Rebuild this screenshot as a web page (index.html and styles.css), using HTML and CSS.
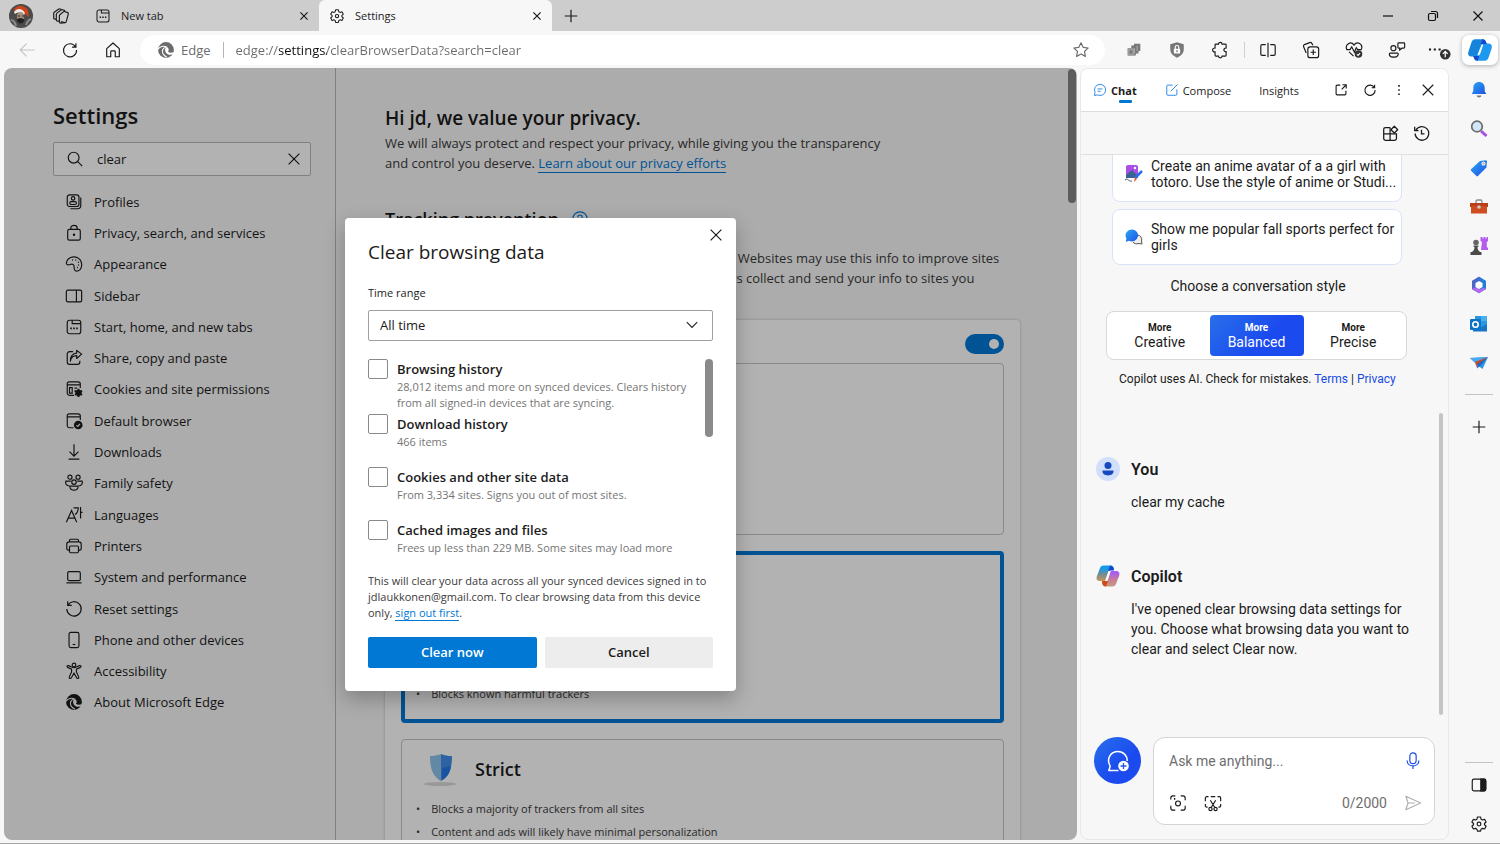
FILE: index.html
```html
<!DOCTYPE html>
<html lang="en">
<head>
  <meta charset="UTF-8" />
  <meta name="viewport" content="width=device-width, initial-scale=1.0"/>
  <title>Settings</title>
  <link rel="stylesheet" href="styles.css">
</head>
<body>
  <!-- shared icons -->
  <svg class="sprite" width="0" height="0" aria-hidden="true">
    <defs>
      <linearGradient id="blue" x1="0" y1="0" x2="1" y2="1"><stop offset="0" stop-color="#2aa8f0"/><stop offset="1" stop-color="#1f50e8"/></linearGradient>
      <linearGradient id="warmLeft" x1="0" y1="0" x2="0" y2="1"><stop offset="0.2" stop-color="#159be8"/><stop offset="0.6" stop-color="#7b8c8c"/><stop offset="1" stop-color="#c9955c"/></linearGradient>
      <linearGradient id="warmRight" x1="0" y1="0" x2="0" y2="1"><stop offset="0.1" stop-color="#a95cf0"/><stop offset="0.55" stop-color="#c67c98"/><stop offset="1" stop-color="#c99a80"/></linearGradient>
      <mask id="swirl">
        <rect width="20" height="20" fill="#fff"/>
        <path d="M1 9.500c2-3.500 6.500-4.500 9.500-2.800-4 .8-5.500 4-4 7.300 1 2 2.500 3.300 4.500 4" stroke="#000" stroke-width="1.300" fill="none"/>
        <path d="M10.200 7c2.800.3 3.600 3 2 5 1.600 1.400 4.300 1.300 6.800.2l-.6 2.300c-3.200 1.600-7 .8-8.600-1.800-1.300-2-1-4.500.4-5.700z" fill="#000"/>
      </mask>
    </defs>
    <symbol id="i-close" viewBox="0 0 20 20"><path d="M4 4l12 12M16 4L4 16"/></symbol>
    <symbol id="i-plus" viewBox="0 0 20 20"><path d="M10 3v14M3 10h14"/></symbol>
    <symbol id="i-gear" viewBox="0 0 20 20"><path d="M8.300 2.200h3.400l.6 2.400 1.500.9 2.400-.7 1.700 3-1.800 1.700v1.300l1.800 1.700-1.700 3-2.400-.7-1.500.9-.6 2.300H8.300l-.6-2.300-1.500-.9-2.400.7-1.700-3 1.800-1.700V9.500L2.100 7.800l1.700-3 2.400.7 1.500-.9z" stroke-linejoin="round"/><circle cx="10" cy="10.100" r="2.100"/></symbol>
    <symbol id="i-page" viewBox="0 0 20 20"><rect x="2.500" y="2.500" width="15" height="15" rx="2.500"/><path d="M8 2.500v3.700h9.500"/><path d="M5.800 11.500h1.800M9.100 11.500h1.800M12.400 11.500h1.800" stroke-width="1.900"/></symbol>
    <symbol id="i-edge" viewBox="0 0 20 20"><circle cx="10" cy="10" r="8.800" fill="currentColor" stroke="none" mask="url(#swirl)"/></symbol>
    <symbol id="i-refresh" viewBox="0 0 20 20"><path d="M16.200 6.500A7.300 7.300 0 1 0 17.300 10M16.600 2.500v4.300h-4.300"/></symbol>
  </svg>

  <header class="tabbar">
    <button class="profile" aria-label="Profile">
      <svg width="24" height="24" viewBox="0 0 24 24">
        <circle cx="12" cy="12" r="12" fill="#4b4b4b"/>
        <path d="M5 5c3-4 9-5 14 1l1 7-4-3C13 5 9 6 6 9z" fill="#c9441f"/>
        <path d="M5 8c3-4 8-4 11 1l-1 2c-3-3-6-3-9-1z" fill="#f0eae4"/>
        <ellipse cx="11.500" cy="12.500" rx="3.500" ry="4.500" fill="#a28e7c"/>
        <path d="M9 12h2M13 12h2M8 16c2-2 5-2 7 0-1 4-6 4-7 0z" fill="#222" stroke="#222"/>
        <path d="M2 16c3 0 4 2 5 6M22 15c-3 1-4 3-5 6" stroke="#8d8d8d" stroke-width="2" fill="none"/>
      </svg>
    </button>
    <button class="workspaces" aria-label="Workspaces">
      <svg class="icon" viewBox="0 0 20 20"><path d="M13.500 5l3.500 1c1 .3 1.400 1 1.100 2l-2.300 8.200c-.3 1-1 1.400-2 1.100l-4-1.100"/><path d="M14 4.300L9 8.300c-.6.500-.8 1-.8 1.700v6.500c0 1 .6 1.500 1.500 1.400l4.500-.5M10.500 3.100L5.800 6.500c-.7.500-1 1-1 1.700v6.200c0 .8.500 1.300 1.300 1.300h2M8 2L2.800 5.600c-.6.400-.9 1-.9 1.700v5c0 .7.500 1.200 1.200 1.200h1.600M8 2l6 1.800v1.600"/></svg>
    </button>
    <div class="tab">
      <svg class="icon" viewBox="0 0 20 20"><use href="#i-page"/></svg>
      <span>New tab</span>
      <button class="tab-close" aria-label="Close New tab"><svg class="icon" viewBox="0 0 20 20"><use href="#i-close"/></svg></button>
    </div>
    <div class="tab active">
      <svg class="icon" viewBox="0 0 20 20"><use href="#i-gear"/></svg>
      <span>Settings</span>
      <button class="tab-close" aria-label="Close Settings"><svg class="icon" viewBox="0 0 20 20"><use href="#i-close"/></svg></button>
    </div>
    <button class="new-tab" aria-label="New tab"><svg class="icon" viewBox="0 0 20 20"><use href="#i-plus"/></svg></button>
    <div class="window-buttons">
      <button aria-label="Minimize"><svg viewBox="0 0 12 12"><path d="M1 6h10"/></svg></button>
      <button aria-label="Restore"><svg viewBox="0 0 12 12"><rect x="1.500" y="3.500" width="7" height="7" rx="1.500"/><path d="M4 1.500h4.500a2 2 0 0 1 2 2V8"/></svg></button>
      <button aria-label="Close"><svg viewBox="0 0 12 12"><path d="M1.500 1.500l9 9M10.500 1.500l-9 9"/></svg></button>
    </div>
  </header>

  <div class="toolbar">
    <button class="tool disabled" aria-label="Back"><svg class="icon" viewBox="0 0 20 20"><path d="M18.500 10h-16M9.500 3l-7 7 7 7"/></svg></button>
    <button class="tool" aria-label="Refresh"><svg class="icon" viewBox="0 0 20 20"><use href="#i-refresh"/></svg></button>
    <button class="tool" aria-label="Home"><svg class="icon" viewBox="0 0 20 20"><path d="M3 8.500L10 2.200l7 6.300v9h-4.500V12a1 1 0 0 0-1-1h-3a1 1 0 0 0-1 1v5.500H3z" stroke-linejoin="round"/></svg></button>
    <div class="address">
      <svg class="icon" viewBox="0 0 20 20"><use href="#i-edge"/></svg>
      <label for="url">Edge</label>
      <input id="url" type="text" value="edge://settings/clearBrowserData?search=clear">
      <button aria-label="Add to favorites"><svg class="icon" viewBox="0 0 20 20"><path d="M10 2l2.400 5 5.500.8-4 3.800 1 5.500-4.900-2.600-4.900 2.600 1-5.500-4-3.800 5.500-.8z" stroke-linejoin="round"/></svg></button>
    </div>
    <button class="tool" aria-label="Extension"><svg class="icon" viewBox="0 0 20 20"><path d="M10 3h7v8h-2v3h-3v2H3V8h4V5h3z" fill="#777" stroke="none"/><path d="M3 8h7v8H3z" fill="#9c9c9c" stroke="none"/><path d="M10.500 8v6M13.500 5v6" stroke="#aaa"/><path d="M5 10.500h3v3.500H5z" fill="#777" stroke="none"/></svg></button>
    <button class="tool" aria-label="Ad blocker"><svg class="icon" viewBox="0 0 20 20"><path d="M10 1.500l7.500 2v6c0 4-3 7-7.500 9-4.500-2-7.500-5-7.500-9v-6z" fill="#777" stroke="none"/><rect x="6.500" y="8.500" width="7" height="5.500" rx="1" fill="#fff" stroke="none"/><path d="M8 9V7a2 2 0 0 1 4 0v2" stroke="#fff"/><path d="M10 10v2.500" stroke="#777"/></svg></button>
    <button class="tool" aria-label="Extensions"><svg class="icon" viewBox="0 0 20 20"><path d="M6 3.500h2.300a2 2 0 0 1 4 0h3.500a1 1 0 0 1 1 1v3.300c-3-.5-3.600 4.400 0 4v4a1 1 0 0 1-1 1h-3.500a2 2 0 0 1-4 0H5.500a1 1 0 0 1-1-1v-3.700c-3.600.5-3.600-4.500 0-4.300V4.500a1 1 0 0 1 1-1z"/></svg></button>
    <span class="divider"></span>
    <button class="tool" aria-label="Split screen"><svg class="icon" viewBox="0 0 20 20"><path d="M10 2v16M7.500 4H3.500a1.500 1.500 0 0 0-1.500 1.500v9A1.500 1.500 0 0 0 3.500 16h4M12.500 4h4A1.500 1.500 0 0 1 18 5.500v9a1.500 1.500 0 0 1-1.500 1.500h-4"/></svg></button>
    <button class="tool" aria-label="Collections"><svg class="icon" viewBox="0 0 20 20"><rect x="6.500" y="6.500" width="12" height="12" rx="2.500"/><path d="M12.500 9.500v6M9.500 12.500h6M4.700 13.300L1.800 6.500C1.300 5.300 1.700 4.500 2.700 4L8.500 1.800c1-.4 1.900 0 2.400.8l1.300 2.200"/></svg></button>
    <button class="tool" aria-label="Browser essentials"><svg class="icon" viewBox="0 0 20 20"><path d="M2 9.500C-.5 4 6.500-.5 10 4.500 13.500-.5 20.500 3.500 18.200 9M4.500 12l5 4.800M1.500 9.500h4l2-3 3 6 2-5 1.500 2h4.500"/><circle cx="15" cy="14.500" r="4.200" fill="#333" stroke="none"/><path d="M13.200 14.800l1.300 1.200 2.300-2.600" stroke="#fff"/></svg></button>
    <button class="tool" aria-label="Share"><svg class="icon" viewBox="0 0 20 20"><circle cx="6" cy="8" r="2.800"/><path d="M2.500 13.500h8c1.500 0 1.500 4.500-4.200 4.500S1 13.500 2.500 13.500zM12 2h5.500a1 1 0 0 1 1 1v4a1 1 0 0 1-1 1h-2l-2.500 2V8h-1a1 1 0 0 1-1-1V3a1 1 0 0 1 1-1z"/></svg></button>
    <button class="tool" aria-label="Settings and more, update available"><svg class="icon more" viewBox="0 0 24 20"><path d="M1 9.500h2.200M6 9.500h2.200M11 9.500h2.200" stroke-width="2"/><circle cx="18" cy="14.500" r="5.500" fill="#333" stroke="none"/><path d="M18 17.500v-6M15.500 14l2.500-2.500 2.500 2.500" stroke="#fff"/></svg></button>
    <button class="copilot-button" aria-label="Copilot">
      <svg width="26" height="26" viewBox="0 0 24 24"><path d="M7.500 2h7c2 0 2.500.8 3.200 3l.6 2H15l-4 11H4.500C1.500 18 .5 16 1.300 13.500l2.600-8c.7-2 1.700-3.500 3.600-3.500z" fill="#1784dc"/><path d="M16.500 22h-7c-2 0-2.500-.8-3.200-3L5.700 17H9l4-11h6.500c3 0 4 2 3.200 4.500l-2.600 8c-.7 2-1.700 3.500-3.600 3.500z" fill="#1d9af0"/><path d="M14 2c2 0 3 .8 3.700 3l.6 1.500h-5.600zM10 22c-2 0-3-.8-3.700-3l-.6-1.500h5.600z" fill="#1549cc"/><path d="M13.300 7.500c.5-1 1.700-1 1.500 0l-2.600 8c-.6 1.500-2.800 2-2.300.5z" fill="#fff"/></svg>
    </button>
  </div>

  <div class="workspace">
    <main class="page">
      <aside class="settings-nav">
        <h1>Settings</h1>
        <div class="search">
          <svg class="icon" viewBox="0 0 20 20"><circle cx="8.500" cy="8.500" r="6"/><path d="M13 13l5 5"/></svg>
          <input type="text" value="clear" aria-label="Search settings">
          <button aria-label="Clear search"><svg class="icon" viewBox="0 0 20 20"><use href="#i-close"/></svg></button>
        </div>
        <nav>
          <a href="#"><svg class="icon" viewBox="0 0 20 20"><rect x="2.500" y="2" width="13" height="13" rx="2.500"/><path d="M17.500 5v9a3.500 3.500 0 0 1-3.500 3.500H6"/><circle cx="9" cy="6" r="1.900"/><rect x="5.300" y="9.500" width="7.400" height="3.300" rx="1.600"/></svg>Profiles</a>
          <a href="#"><svg class="icon" viewBox="0 0 20 20"><rect x="3" y="6" width="14" height="12" rx="1.800"/><path d="M6.500 6V4.500c0-4 7-4 7 0V6"/><circle cx="10" cy="12" r=".7" fill="currentColor"/></svg>Privacy, search, and services</a>
          <a href="#"><svg class="icon" viewBox="0 0 20 20"><path d="M1.500 9C2.500 3 9 .5 14 3c4 2 5.500 7 4 11-1 3.500-5 5-7 3-2-2 .5-5-2-6.500C7 9.500 5.500 11 4 11c-1.700 0-2.700-.8-2.500-2z"/><path d="M8 5.500h1M11.500 5.500h1M14.300 8h1M14.700 11.200h1M13.200 14h1" stroke-width="1.700"/></svg>Appearance</a>
          <a href="#"><svg class="icon" viewBox="0 0 20 20"><rect x="1.500" y="3.500" width="17" height="13" rx="1.500"/><path d="M12.700 3.500v13"/></svg>Sidebar</a>
          <a href="#"><svg class="icon" viewBox="0 0 20 20"><use href="#i-page"/></svg>Start, home, and new tabs</a>
          <a href="#"><svg class="icon" viewBox="0 0 20 20"><path d="M9 3H5a2.500 2.500 0 0 0-2.500 2.500v9A2.500 2.500 0 0 0 5 17h9a2.500 2.500 0 0 0 2.500-2.500V13"/><path d="M6 13c.5-4 3-6.200 7-6.200V10l5.500-4.800L13 1v3C8.500 4.300 6 8 6 13z" stroke-linejoin="round" transform="translate(0 .5)"/></svg>Share, copy and paste</a>
          <a href="#"><svg class="icon" viewBox="0 0 20 20"><path d="M10 17H5a2.500 2.500 0 0 1-2.500-2.500v-10A2.500 2.500 0 0 1 5 2h9.500A2.500 2.500 0 0 1 17 4.500V9M2.500 5.500H17M5 8.500h3v6H5zM10.500 9h3M10.500 12h1"/><path d="M15 9.800v9M11.100 12l7.800 4.600M18.900 12l-7.800 4.600" stroke-width="2.200"/><circle cx="15" cy="14.300" r="2.300" stroke-width="2.400"/></svg>Cookies and site permissions</a>
          <a href="#"><svg class="icon" viewBox="0 0 20 20"><path d="M9.500 17.500H5A2.500 2.500 0 0 1 2.500 15V4.500A2.500 2.500 0 0 1 5 2h9.500A2.500 2.500 0 0 1 17 4.500V9M2.500 5.500H17"/><circle cx="14.700" cy="14.500" r="4.800" fill="currentColor" stroke="none"/><path d="M12.700 14.800l1.400 1.300 2.600-2.800" stroke="#f7f7f7"/></svg>Default browser</a>
          <a href="#"><svg class="icon" viewBox="0 0 20 20"><path d="M10 1.500v13M5 9.500l5 5 5-5M4 18h12"/></svg>Downloads</a>
          <a href="#"><svg class="icon" viewBox="0 0 20 20"><circle cx="5.500" cy="3.500" r="2.300"/><circle cx="14.500" cy="3.500" r="2.300"/><circle cx="10" cy="9" r="2.500"/><path d="M6.500 8H1c-1 3 1.200 5.500 3.800 5M13.500 8H19c1 3-1.200 5.500-3.800 5M5.500 13.500h9c.7 6-9.700 6-9 0z"/></svg>Family safety</a>
          <a href="#"><svg class="icon" viewBox="0 0 20 20"><path d="M1.500 18L7.300 5l5.700 13M3.500 13.500h7.600M9.500 2h5.200c0 3.500-1 6-3.700 7.500M17.300 1v13M17.300 7h2.200"/></svg>Languages</a>
          <a href="#"><svg class="icon" viewBox="0 0 20 20"><path d="M5 14.500H3.500A1.500 1.500 0 0 1 2 13V8c0-1.500 1-2.500 2.500-2.500h11C17 5.500 18 6.500 18 8v5a1.500 1.500 0 0 1-1.500 1.500H15M5 5.500V3.800C5 3 5.500 2.500 6.300 2.500h7.400c.8 0 1.300.5 1.300 1.300v1.700"/><rect x="5" y="10" width="10" height="7.500" rx="1.300"/></svg>Printers</a>
          <a href="#"><svg class="icon" viewBox="0 0 20 20"><rect x="3" y="4" width="14" height="10" rx="1.500"/><path d="M1.500 16.500h17"/></svg>System and performance</a>
          <a href="#"><svg class="icon" viewBox="0 0 20 20"><path d="M3 6a8 8 0 1 1-1 4M3 1.500V6h4.500"/></svg>Reset settings</a>
          <a href="#"><svg class="icon" viewBox="0 0 20 20"><rect x="4.500" y="1.500" width="11" height="17" rx="2"/><path d="M8.500 15h3"/></svg>Phone and other devices</a>
          <a href="#"><svg class="icon" viewBox="0 0 20 20"><circle cx="10" cy="3.300" r="2"/><path d="M7.500 5.500L4 4c-1.800-.6-2.300 1.300-1 2l4.300 2v3l-2.500 5.500c-.6 1.700 1.500 2.500 2.300 1L10 12.500l2.900 5c.8 1.500 2.900.7 2.300-1L12.700 11V8L17 6c1.300-.7.800-2.600-1-2l-3.500 1.500a5 5 0 0 1-5 0z"/></svg>Accessibility</a>
          <a href="#"><svg class="icon" viewBox="0 0 20 20"><use href="#i-edge"/></svg>About Microsoft Edge</a>
        </nav>
      </aside>

      <section class="settings-content">
        <h2 class="hero">Hi jd, we value your privacy.</h2>
        <p>We will always protect and respect your privacy, while giving you the transparency<br>and control you deserve. <a href="#">Learn about our privacy efforts</a></p>
        <h2 class="section-title">Tracking prevention <svg class="icon" viewBox="0 0 20 20"><circle cx="10" cy="10" r="8"/><path d="M7.500 8c0-3.300 5-3.200 5-.2 0 1.700-2.500 2-2.500 4M10 13.500v1.300"/></svg></h2>
        <p>Websites use trackers to collect info about your browsing. Websites may use this info to improve sites<br>and show you content like personalized ads. Some trackers collect and send your info to sites you</p>
        <div class="card">
          <div class="card-head">
            <input class="toggle" type="checkbox" aria-label="Tracking prevention" checked>
          </div>
          <div class="level"></div>
          <div class="level selected">
            <ul>
              <li>Blocks known harmful trackers</li>
            </ul>
          </div>
          <div class="level">
            <h3><svg width="36" height="36" viewBox="0 0 36 36"><ellipse cx="18" cy="33" rx="16" ry="2" fill="#dcdcdc"/><path d="M8 5c4 0 7-.6 11-2v27C12 26 8 20 8 5z" fill="#8fc3ec"/><path d="M19 3c4 1.400 7 2 11 2 0 15-4 21-11 25z" fill="#3f8fe6"/><path d="M20 17l9-2c-1 7-4 11.500-9 14z" fill="#2677e8"/></svg>Strict</h3>
            <ul>
              <li>Blocks a majority of trackers from all sites</li>
              <li>Content and ads will likely have minimal personalization</li>
            </ul>
          </div>
        </div>
      </section>
      <span class="page-thumb"></span>

      <div class="overlay">
        <div class="dialog" role="dialog" aria-labelledby="dialog-title">
          <button class="dialog-close" aria-label="Close"><svg class="icon" viewBox="0 0 20 20"><use href="#i-close"/></svg></button>
          <h2 id="dialog-title">Clear browsing data</h2>
          <label class="range-label" for="range">Time range</label>
          <div class="select-wrap">
            <select id="range"><option>All time</option></select>
            <svg class="icon" viewBox="0 0 20 20"><path d="M3.500 6.500L10 13l6.500-6.500"/></svg>
          </div>
          <div class="options">
            <div class="option">
              <input id="history" type="checkbox">
              <label for="history">Browsing history<small>28,012 items and more on synced devices. Clears history<br>from all signed-in devices that are syncing.</small></label>
            </div>
            <div class="option">
              <input id="downloads" type="checkbox">
              <label for="downloads">Download history<small>466 items</small></label>
            </div>
            <div class="option">
              <input id="cookies" type="checkbox">
              <label for="cookies">Cookies and other site data<small>From 3,334 sites. Signs you out of most sites.</small></label>
            </div>
            <div class="option">
              <input id="cache" type="checkbox">
              <label for="cache">Cached images and files<small>Frees up less than 229 MB. Some sites may load more</small></label>
            </div>
            <span class="options-thumb"></span>
          </div>
          <p>This will clear your data across all your synced devices signed in to<br>jdlaukkonen@gmail.com. To clear browsing data from this device<br>only, <a href="#">sign out first</a>.</p>
          <div class="dialog-buttons">
            <button class="primary">Clear now</button>
            <button>Cancel</button>
          </div>
        </div>
      </div>
    </main>

    <section class="copilot">
      <header class="copilot-head">
        <button class="chat-tab current"><svg class="icon" viewBox="0 0 20 20"><path d="M2 18l1-4.500A8 8 0 1 1 6.500 17z" stroke-linejoin="round"/><path d="M6.500 8.500h7M6.500 11.800h4.500"/></svg>Chat</button>
        <button class="chat-tab"><svg class="icon" viewBox="0 0 20 20"><path d="M11 3H4a1.500 1.500 0 0 0-1.500 1.500V16A1.500 1.500 0 0 0 4 17.500h11.500A1.500 1.500 0 0 0 17 16V9M8 12L18 2"/></svg>Compose</button>
        <button class="chat-tab">Insights</button>
        <div class="copilot-tools">
          <button aria-label="Open in new tab"><svg class="icon" viewBox="0 0 20 20"><path d="M9 3H4.500A1.500 1.500 0 0 0 3 4.500v11A1.500 1.500 0 0 0 4.500 17h11a1.500 1.500 0 0 0 1.500-1.500V11M12 2.500h5.500V8M17.500 2.500L11 9"/></svg></button>
          <button aria-label="Refresh"><svg class="icon" viewBox="0 0 20 20"><use href="#i-refresh"/></svg></button>
          <button aria-label="More options"><svg class="icon" viewBox="0 0 20 20"><path d="M10 3v2.200M10 9v2.200M10 15v2.200" stroke-width="2.300"/></svg></button>
          <button aria-label="Close"><svg class="icon" viewBox="0 0 20 20"><path d="M2.500 2.500l15 15M17.500 2.500l-15 15"/></svg></button>
        </div>
      </header>
      <div class="copilot-bar">
        <button aria-label="Plugins"><svg class="icon" viewBox="0 0 20 20"><path d="M9.500 3H4a2 2 0 0 0-2 2v11a2 2 0 0 0 2 2h11a2 2 0 0 0 2-2v-5.500H2M9.500 3v15"/><path d="M14.500 1.500l4 4-4 4-4-4z" stroke-linejoin="round"/></svg></button>
        <button aria-label="Recent activity"><svg class="icon" viewBox="0 0 20 20"><path d="M3.500 6a8 8 0 1 1-1 4M2 2v4.500h4.500M10 5.500v5h3.500"/></svg></button>
      </div>

      <div class="conversation">
        <button class="suggestion">
          <svg width="18" height="18" viewBox="0 0 18 18"><rect x="1" y="0" width="12" height="12" rx="2" fill="#a94fe8"/><path d="M1 10l6-5 6 6v2H1z" fill="#3a6391"/><circle cx="10" cy="3" r="1.200" fill="#fff"/><path d="M17 6l-7 7" stroke="#2c6cf0" stroke-width="2.500"/><path d="M10 12l2 2-3 3z" fill="#e0552a"/><path d="M0 15c3-3 3 2 7 1" stroke="#555" fill="none"/></svg>
          <span>Create an anime avatar of a a girl with<br>totoro. Use the style of anime or Studi...</span>
        </button>
        <button class="suggestion">
          <svg width="18" height="18" viewBox="0 0 18 18"><path d="M12 7a4.500 4.500 0 0 1 4.500 6l.5 3-3-.5c-3 1-5 0-6-1.500" fill="#eee" stroke="#555"/><path d="M7 1.500a6 6 0 1 1-3 11.200L.8 14l.6-3.500A6 6 0 0 1 7 1.500z" fill="url(#blue)"/></svg>
          <span>Show me popular fall sports perfect for<br>girls</span>
        </button>
        <p class="style-title">Choose a conversation style</p>
        <div class="styles">
          <button><b>More</b>Creative</button>
          <button class="chosen"><b>More</b>Balanced</button>
          <button><b>More</b>Precise</button>
        </div>
        <p class="notice">Copilot uses AI. Check for mistakes. <a href="#">Terms</a> | <a href="#">Privacy</a></p>

        <article class="message">
          <svg width="24" height="24" viewBox="0 0 24 24"><circle cx="12" cy="12" r="12" fill="#d1dffa"/><circle cx="12" cy="8.500" r="3.500" fill="#1549c0"/><path d="M6.500 13.500h11c1 6.500-12 6.500-11 0z" fill="#1549c0"/></svg>
          <h3>You</h3>
          <p>clear my cache</p>
        </article>
        <article class="message">
          <svg width="24" height="24" viewBox="0 0 24 24"><path d="M7.500 1.500h7c2 0 2.500.8 3.200 3L18 6h-3.500L11 17H4.500C1 17 0 15 .8 12.500l3-8c.7-2 1.800-3 3.700-3z" fill="url(#warmLeft)"/><path d="M16.500 22.500h-7c-2 0-2.500-.8-3.200-3L6 17h3.500L13 7h6.500c3.500 0 4.500 2 3.700 4.500l-3 8c-.7 2-1.800 3-3.700 3z" fill="url(#warmRight)"/><path d="M14 1.500c2 0 3 .8 3.700 3L18 6.500h-6z" fill="#1549cc"/><path d="M10 22.500c-2 0-3-.8-3.700-3L6 17h6z" fill="#d04a18"/><path d="M12.500 7h2.300L11.500 17H9z" fill="#fff"/></svg>
          <h3>Copilot</h3>
          <p>I've opened clear browsing data settings for<br>you. Choose what browsing data you want to<br>clear and select Clear now.</p>
        </article>
        <span class="chat-thumb"></span>
      </div>

      <footer class="composer">
        <button class="new-topic" aria-label="New topic"><svg width="24" height="24" viewBox="0 0 24 24"><path d="M12.500 21.500H2.800l1.400-4.300C-.2 9 5 2.500 12 2.500c5.500 0 9.500 4.500 9.200 9.500" fill="none" stroke="#fff" stroke-width="1.500" stroke-linejoin="round"/><circle cx="17.500" cy="17" r="5.300" fill="#fff"/><path d="M17.500 14v6M14.500 17h6" stroke="#1f5ae8" stroke-width="1.300"/></svg></button>
        <div class="ask">
          <div class="ask-row">
            <textarea rows="1" placeholder="Ask me anything..." aria-label="Ask me anything"></textarea>
            <button class="mic" aria-label="Use microphone"><svg class="icon" viewBox="0 0 20 20"><rect x="6.500" y="1" width="7" height="12" rx="3.500"/><path d="M3.500 9.500c0 8 13 8 13 0M10 15.500V19"/></svg></button>
          </div>
          <div class="ask-row">
            <button aria-label="Add an image"><svg class="icon" viewBox="0 0 20 20"><path d="M2 6V4.500A2.500 2.500 0 0 1 4.500 2H7M13 2h2.500A2.500 2.500 0 0 1 18 4.500V7M18 13v2.500a2.500 2.500 0 0 1-2.500 2.500H13M7 18H4.500A2.500 2.500 0 0 1 2 15.500V13"/><circle cx="10" cy="10.500" r="2.700"/><path d="M5.500 5.500h1.500" stroke-width="2"/></svg></button>
            <button aria-label="Add a screenshot"><svg class="icon" viewBox="0 0 20 20"><path d="M4 14.500H3A1.500 1.500 0 0 1 1.500 13v-2M1.500 8V4.500A1.500 1.500 0 0 1 3 3h2M7.500 3h5M15 3h2a1.500 1.500 0 0 1 1.500 1.500V8M18.500 11v2a1.500 1.500 0 0 1-1.500 1.500h-1M7 7l5 8M13 7l-5 8"/><circle cx="7.200" cy="16.700" r="1.800"/><circle cx="12.800" cy="16.700" r="1.800"/></svg></button>
            <span class="count">0/2000</span>
            <button class="send" aria-label="Submit"><svg class="icon" viewBox="0 0 20 20"><path d="M2 2.500L18.500 10 2 17.500 4.500 10zM4.500 10H12" stroke-linejoin="round"/></svg></button>
          </div>
        </div>
      </footer>
    </section>

    <aside class="rail">
      <button aria-label="Notifications"><svg viewBox="0 0 18 18"><path d="M9 1C5.500 1 3.300 3.500 3.300 6.700V10L1.800 13h14.400l-1.500-3V6.700C14.700 3.500 12.500 1 9 1z" fill="url(#blue)"/><path d="M6.500 14.500h5c-.5 2.500-4.500 2.500-5 0z" fill="#777"/></svg></button>
      <button aria-label="Search"><svg viewBox="0 0 18 18"><path d="M11 11l5.500 5" stroke="#a84fe8" stroke-width="3"/><circle cx="7" cy="6.500" r="5.300" fill="#d3e7fb" stroke="#6d6d6d" stroke-width="1.700"/></svg></button>
      <button aria-label="Shopping"><svg viewBox="0 0 18 18"><path d="M10 2l6-.7 1 .8-.6 6.400-8.200 8.300c-.7.7-1.300.7-2 0L1.300 12c-.7-.7-.7-1.300 0-2z" fill="url(#blue)"/><circle cx="13.500" cy="4.700" r="1.600" fill="#c4b0a0" stroke="#fff"/></svg></button>
      <button aria-label="Tools"><svg viewBox="0 0 18 18"><path d="M6 5V3.500C6 2.600 6.500 2 7.500 2h3c1 0 1.500.6 1.500 1.500V5" fill="none" stroke="#8d8d8d" stroke-width="1.300"/><path d="M0 5h18v4H0z" fill="#b83f18"/><path d="M1 8h16v7.500H1z" fill="#d04d20"/><circle cx="9" cy="9" r="1.800" fill="#ccc"/></svg></button>
      <button aria-label="Games"><svg viewBox="0 0 18 18"><path d="M10.500 0h2v1.500h1V0h2v1.500h1V0h1.500v4l-1.200 1v5.500H18V13h-7l1-8-1.500-1z" fill="#b45cf0"/><circle cx="6" cy="5.500" r="2.800" fill="#666"/><path d="M3.500 8.500h5v1.200H7.500c0 2.500.5 3.500 2.500 5.300h1.500V18H.5v-3H2c2-1.800 2.500-2.800 2.500-5.300h-1z" fill="#4a4a4a"/></svg></button>
      <button aria-label="Microsoft 365"><svg viewBox="0 0 18 18"><path d="M9 .8l7 4.200v8L9 17.200 2 13V5z" fill="#2e7ce8"/><path d="M2 5l7-4.200 2 3.500L6 7v6l-1 2-3-2z" fill="#4969c8"/><path d="M2 13l4-2 4 2.500 6-3V13l-7 4.200z" fill="#b36ae8"/><path d="M9 .8l7 4.200v8l-3.500-2V7z" fill="#267ed4"/><path d="M9 5l3.500 2v4L9 13l-3.500-2V7z" fill="#fff"/></svg></button>
      <button aria-label="Outlook"><svg viewBox="0 0 18 18"><path d="M5 1h12v15H5z" fill="#2a96e0"/><path d="M11 1h6v5h-6z" fill="#48b0f0"/><path d="M3 9l7 4 7-4v7.500H3z" fill="#1675c8"/><rect y="4" width="11" height="11" rx="1" fill="#0c74c8"/><circle cx="5.500" cy="9.500" r="2.700" fill="none" stroke="#fff" stroke-width="1.600"/></svg></button>
      <button aria-label="Drop"><svg viewBox="0 0 18 18"><path d="M0 4l18-1-5.500 12L8 11.500z" fill="#2a96e8"/><path d="M0 4l18-1L5 8.500z" fill="#46a8ee"/><path d="M5 8l13-5L7.500 10.500 7 14z" fill="#c9481f"/><path d="M7.500 10L17 4l-7 8-3 2.500z" fill="#1767c8"/></svg></button>
      <hr>
      <button class="line" aria-label="Customize"><svg viewBox="0 0 20 20"><use href="#i-plus"/></svg></button>
      <span class="spacer"></span>
      <hr>
      <button class="line" aria-label="Hide sidebar"><svg viewBox="0 0 20 20"><rect x="2.500" y="3.500" width="15" height="13" rx="2"/><path d="M12 3.500h4a1.500 1.500 0 0 1 1.500 1.500v10a1.500 1.500 0 0 1-1.500 1.500h-4z" fill="currentColor"/></svg></button>
      <button class="line" aria-label="Sidebar settings"><svg viewBox="0 0 20 20"><use href="#i-gear"/></svg></button>
    </aside>
  </div>
</body>
</html>
```
FILE: styles.css
```css
* {
  box-sizing: border-box;
}

body {
  margin: 0;
  height: 100vh;
  display: flex;
  flex-direction: column;
  overflow: hidden;
  font-family: "Open Sans", sans-serif;
  font-size: 13px;
  color: #1b1b1b;
  background: #f7f7f7;
  border-bottom: 1px solid #a6a6a6;
}

h1, h2, h3, p, ul {
  margin: 0;
  padding: 0;
  font-weight: 600;
}

p, ul {
  font-weight: 400;
}

button {
  padding: 0;
  border: none;
  background: none;
  font: inherit;
  color: inherit;
  display: flex;
  align-items: center;
  justify-content: center;
  cursor: pointer;
}

input, select, textarea {
  margin: 0;
  border: none;
  outline: none;
  background: none;
  font: inherit;
  color: inherit;
}

svg {
  flex: none;
}

.sprite {
  position: absolute;
}

.icon {
  width: 18px;
  height: 18px;
  fill: none;
  stroke: currentColor;
  stroke-width: 1.3;
}

/* tab strip */
.tabbar {
  display: flex;
  height: 31px;
  flex: none;
  background: #cdcdcd;
  font-size: 11px;
}

.profile {
  width: 42px;
}

.workspaces {
  width: 38px;
}

.tab {
  width: 239px;
  padding: 0 8px 0 15px;
  display: flex;
  align-items: center;
  gap: 10px;
}

.tab .icon {
  width: 16px;
  height: 16px;
}

.tab.active {
  width: 233px;
  padding-left: 10px;
  background: #f7f7f7;
  border-radius: 6px 6px 0 0;
}

.tab-close {
  margin-left: auto;
  width: 14px;
}

.tab .tab-close .icon {
  width: 12px;
  height: 12px;
  stroke-width: 2;
}

.new-tab {
  width: 37px;
}

.window-buttons {
  margin-left: auto;
  display: flex;
}

.window-buttons button {
  width: 45px;
}

.window-buttons svg {
  width: 12px;
  height: 12px;
  fill: none;
  stroke: #111;
  stroke-width: 1.2;
}

/* toolbar */
.toolbar {
  display: flex;
  align-items: center;
  height: 37px;
  flex: none;
  padding: 0 2px 0 5px;
}

.tool {
  width: 43px;
  height: 30px;
}

.tool.disabled {
  color: #c4c4c4;
}

.icon.more {
  width: 23px;
  height: 20px;
}

.address {
  flex: 1;
  height: 30px;
  margin: 0 7px 0 6px;
  padding: 0 15px 0 17px;
  display: flex;
  align-items: center;
  background: #fff;
  border-radius: 15px;
  color: #6b6b6b;
}

.address label {
  margin: 0 12px 0 6px;
  padding-right: 12px;
  border-right: 1px solid #b5b5b5;
  line-height: 16px;
}

.address input {
  flex: 1;
  padding: 0;
  line-height: 20px;
  color: transparent;
  background: linear-gradient(90deg, #6b6b6b 43px, #111 43px, #111 91px, #6b6b6b 91px);
  -webkit-background-clip: text;
  background-clip: text;
}

.divider {
  width: 1px;
  height: 16px;
  margin: 0 1px 0 3px;
  background: #cfcfcf;
}

.copilot-button {
  width: 36px;
  height: 30px;
  margin-left: 1px;
  border-radius: 7px;
  background: #fff;
  box-shadow: 0 1px 4px rgba(0, 0, 0, 0.3);
}

/* main area */
.workspace {
  flex: 1;
  min-height: 0;
  display: flex;
  padding-left: 4px;
}

.page {
  flex: 1;
  min-width: 0;
  margin-bottom: 3px;
  position: relative;
  display: flex;
  overflow: hidden;
  border-radius: 8px;
}

.settings-nav {
  width: 332px;
  flex: none;
  padding: 32px 24px 122px 49px;
  display: flex;
  flex-direction: column;
  border-right: 1px solid #b8b8b8;
}

.settings-nav h1 {
  font-size: 22px;
  line-height: 30px;
}

.search {
  display: flex;
  align-items: center;
  height: 34px;
  margin: 12px 0 10px;
  padding: 0 7px 0 12px;
  background: #fff;
  border: 1px solid #b8b8b8;
  border-radius: 2px;
}

.search input {
  flex: 1;
  min-width: 0;
  padding: 0 0 0 13px;
}

.settings-nav nav {
  flex: 1;
  display: flex;
  flex-direction: column;
}

.settings-nav a {
  flex: 1;
  display: flex;
  align-items: center;
  gap: 11px;
  padding-left: 12px;
  color: inherit;
  text-decoration: none;
}

.settings-content {
  flex: 1;
  min-width: 0;
  padding: 37px 57px 0 49px;
}

.hero {
  font-size: 19px;
  line-height: 26px;
  margin-bottom: 2px;
}

.settings-content p {
  line-height: 20px;
  color: #3a3a3a;
  white-space: nowrap;
}

.settings-content p a,
.dialog p a {
  color: #0078d4;
  text-decoration: none;
  border-bottom: 1px solid;
}

.section-title {
  display: flex;
  align-items: center;
  gap: 12px;
  margin: 32px 0 15px;
  font-size: 18px;
  line-height: 28px;
}

.section-title .icon {
  color: #0078d4;
}

.card {
  margin-top: 32px;
  padding: 0 16px;
  background: #fff;
  border-radius: 4px;
  box-shadow: 0 0 3px rgba(0, 0, 0, 0.25);
}

.card-head {
  height: 43px;
  padding-top: 4px;
  display: flex;
  align-items: center;
  justify-content: flex-end;
}

.toggle {
  appearance: none;
  width: 39px;
  height: 20px;
  padding: 5px;
  border-radius: 10px;
  background: #0078d4;
  display: flex;
  justify-content: flex-end;
}

.toggle::before {
  content: "";
  width: 10px;
  height: 10px;
  border-radius: 50%;
  background: #fff;
}

.level {
  min-height: 172px;
  margin-bottom: 16px;
  padding: 12px 14px 20px;
  border: 1px solid #c4c4c4;
  border-radius: 4px;
}

.level.selected {
  display: flex;
  align-items: flex-end;
  padding: 9px 11px 14px;
  border: 4px solid #0078d4;
}

.level h3 {
  display: flex;
  align-items: center;
  gap: 17px;
  height: 34px;
  margin: 0 0 11px 6px;
  font-size: 18px;
}

.level ul {
  list-style: none;
  font-size: 11px;
  line-height: 23px;
  color: #3a3a3a;
}

.level li {
  display: flex;
  gap: 11px;
}

.level li::before {
  content: "•";
}

.page-thumb {
  position: absolute;
  top: 1px;
  right: 1px;
  width: 8px;
  height: 134px;
  border-radius: 4px;
  background: #858585;
}

/* clear data dialog */
.overlay {
  position: absolute;
  inset: 0;
  display: flex;
  align-items: center;
  justify-content: center;
  background: rgba(0, 0, 0, 0.3);
}

.dialog {
  position: relative;
  width: 391px;
  padding: 20px 23px 23px;
  background: #fff;
  border-radius: 4px;
  box-shadow: 0 8px 20px rgba(0, 0, 0, 0.25);
}

.dialog-close {
  position: absolute;
  top: 8px;
  right: 11px;
}

.dialog h2 {
  font-size: 19px;
  font-weight: 500;
  line-height: 28px;
}

.range-label {
  display: block;
  margin: 18px 0 8px;
  font-size: 11px;
  line-height: 18px;
}

.select-wrap {
  display: grid;
  align-items: center;
}

.select-wrap select {
  grid-area: 1 / 1;
  appearance: none;
  height: 31px;
  padding: 0 11px;
  border: 1px solid #a0a0a0;
  border-radius: 2px;
}

.select-wrap .icon {
  grid-area: 1 / 1;
  justify-self: end;
  width: 16px;
  margin-right: 13px;
}

.options {
  position: relative;
  margin: 18px 0 17px;
}

.option {
  display: flex;
  gap: 9px;
  min-height: 53px;
  padding-bottom: 3px;
}

.option:nth-child(4) {
  min-height: 0;
  padding-bottom: 0;
}

.option input {
  appearance: none;
  flex: none;
  width: 20px;
  height: 20px;
  border: 1px solid #8a8a8a;
  border-radius: 2px;
}

.option label {
  font-weight: 600;
  line-height: 20px;
}

.option small {
  display: block;
  font-size: 11px;
  font-weight: 400;
  line-height: 16px;
  color: #757575;
}

.options-thumb {
  position: absolute;
  top: 0;
  right: 0;
  width: 8px;
  height: 78px;
  border-radius: 4px;
  background: #8a8a8a;
}

.dialog p {
  font-size: 11px;
  line-height: 16px;
  color: #3a3a3a;
  white-space: nowrap;
}

.dialog-buttons {
  display: flex;
  gap: 8px;
  margin-top: 16px;
}

.dialog-buttons button {
  flex: 1;
  height: 31px;
  border-radius: 2px;
  font-weight: 600;
  background: #ededed;
}

.dialog-buttons .primary {
  background: #0078d4;
  color: #fff;
}

/* copilot panel */
.copilot {
  width: 369px;
  flex: none;
  margin: 0 0 3px 3px;
  display: flex;
  flex-direction: column;
  overflow: hidden;
  font-family: Roboto, sans-serif;
  font-size: 14px;
  border: 1px solid #e8e8e8;
  border-radius: 8px;
}

.copilot-head {
  display: flex;
  align-items: center;
  gap: 28px;
  height: 43px;
  padding: 0 13px 0 12px;
  background: #fff;
  border-bottom: 1px solid #ddd;
  font-family: "Open Sans", sans-serif;
  font-size: 11px;
}

.chat-tab {
  position: relative;
  gap: 4px;
}

.chat-tab .icon {
  width: 14px;
  height: 14px;
  color: #2080e8;
}

.chat-tab.current {
  font-weight: 700;
}

.chat-tab.current::after {
  content: "";
  position: absolute;
  right: 5px;
  bottom: -5px;
  width: 13px;
  height: 3px;
  border-radius: 1px;
  background: #0078d4;
}

.copilot-tools {
  margin-left: auto;
  display: flex;
  gap: 15px;
}

.copilot-tools .icon {
  width: 14px;
  height: 14px;
  stroke-width: 1.6;
}

.copilot-bar {
  display: flex;
  align-items: center;
  justify-content: flex-end;
  gap: 14px;
  height: 43px;
  padding-right: 18px;
  border-bottom: 1px solid #e0e0e0;
}

.copilot-bar .icon {
  width: 17px;
  height: 17px;
  stroke-width: 1.5;
}

.conversation {
  position: relative;
  flex: 1;
  min-height: 0;
  overflow: hidden;
  padding: 0 15px;
}

.suggestion {
  width: 290px;
  height: 56px;
  margin: -9px auto 7px 16px;
  padding: 0 12px;
  justify-content: flex-start;
  gap: 8px;
  border: 1px solid #d9e3f8;
  border-radius: 8px;
  background: #fff;
  text-align: left;
  line-height: 16px;
  white-space: nowrap;
}

.suggestion + .suggestion {
  margin-top: 0;
}

.style-title {
  width: 290px;
  margin: 12px 0 16px 17px;
  line-height: 18px;
  text-align: center;
}

.styles {
  display: flex;
  width: 301px;
  margin-left: 10px;
  padding: 3px;
  background: #fff;
  border: 1px solid #d8d8d8;
  border-radius: 8px;
}

.styles button {
  flex: 1;
  height: 41px;
  flex-direction: column;
  line-height: 16px;
  border-radius: 4px;
}

.styles b {
  font-size: 10px;
  line-height: 12px;
}

.styles .chosen {
  flex: 0 0 94px;
  color: #fff;
  background: linear-gradient(135deg, #2870ea, #1b4aef 60%);
}

.notice {
  margin: 11px 0 70px 23px;
  font-size: 12px;
  line-height: 16px;
}

.notice a {
  color: #174ae4;
  text-decoration: none;
}

.message {
  display: grid;
  grid-template-columns: 24px 1fr;
  column-gap: 11px;
  row-gap: 11px;
  align-items: center;
  margin-bottom: 52px;
}

.message h3 {
  font-size: 16px;
}

.message p {
  grid-column: 2;
  line-height: 20px;
  white-space: nowrap;
}

.chat-thumb {
  position: absolute;
  right: 5px;
  bottom: 12px;
  width: 4px;
  height: 302px;
  border-radius: 2px;
  background: #c4c4c4;
}

.composer {
  flex: none;
  display: flex;
  gap: 12px;
  align-items: flex-start;
  padding: 10px 13px 14px;
}

.new-topic {
  width: 47px;
  height: 47px;
  border-radius: 50%;
  background: linear-gradient(135deg, #2870ea, #1b4aef 60%);
}

.ask {
  flex: 1;
  height: 88px;
  padding: 11px 12px 12px 15px;
  display: flex;
  flex-direction: column;
  justify-content: space-between;
  background: #fff;
  border: 1px solid #d4d4d4;
  border-radius: 12px;
}

.ask-row {
  display: flex;
  align-items: center;
  gap: 17px;
}

.ask textarea {
  flex: 1;
  min-width: 0;
  height: 24px;
  padding: 0;
  line-height: 24px;
  resize: none;
}

.ask textarea::placeholder {
  color: #6e6e6e;
}

.mic {
  color: #174ae4;
}

.count {
  margin-left: auto;
  color: #6e6e6e;
}

.send {
  color: #b0b0b0;
}

/* right rail */
.rail {
  width: 51px;
  flex: none;
  padding: 2px 0 0 8px;
  display: flex;
  flex-direction: column;
  align-items: center;
}

.rail button {
  width: 36px;
  height: 39px;
}

.rail svg {
  width: 18px;
  height: 18px;
}

.rail .line svg {
  fill: none;
  stroke: #1b1b1b;
  stroke-width: 1.3;
}

.rail hr {
  width: 28px;
  margin: 12px 0;
  border: none;
  border-top: 1px solid #c4c4c4;
}

.rail .spacer {
  flex: 1;
}

.rail .spacer + hr {
  margin-bottom: 2px;
}
```
